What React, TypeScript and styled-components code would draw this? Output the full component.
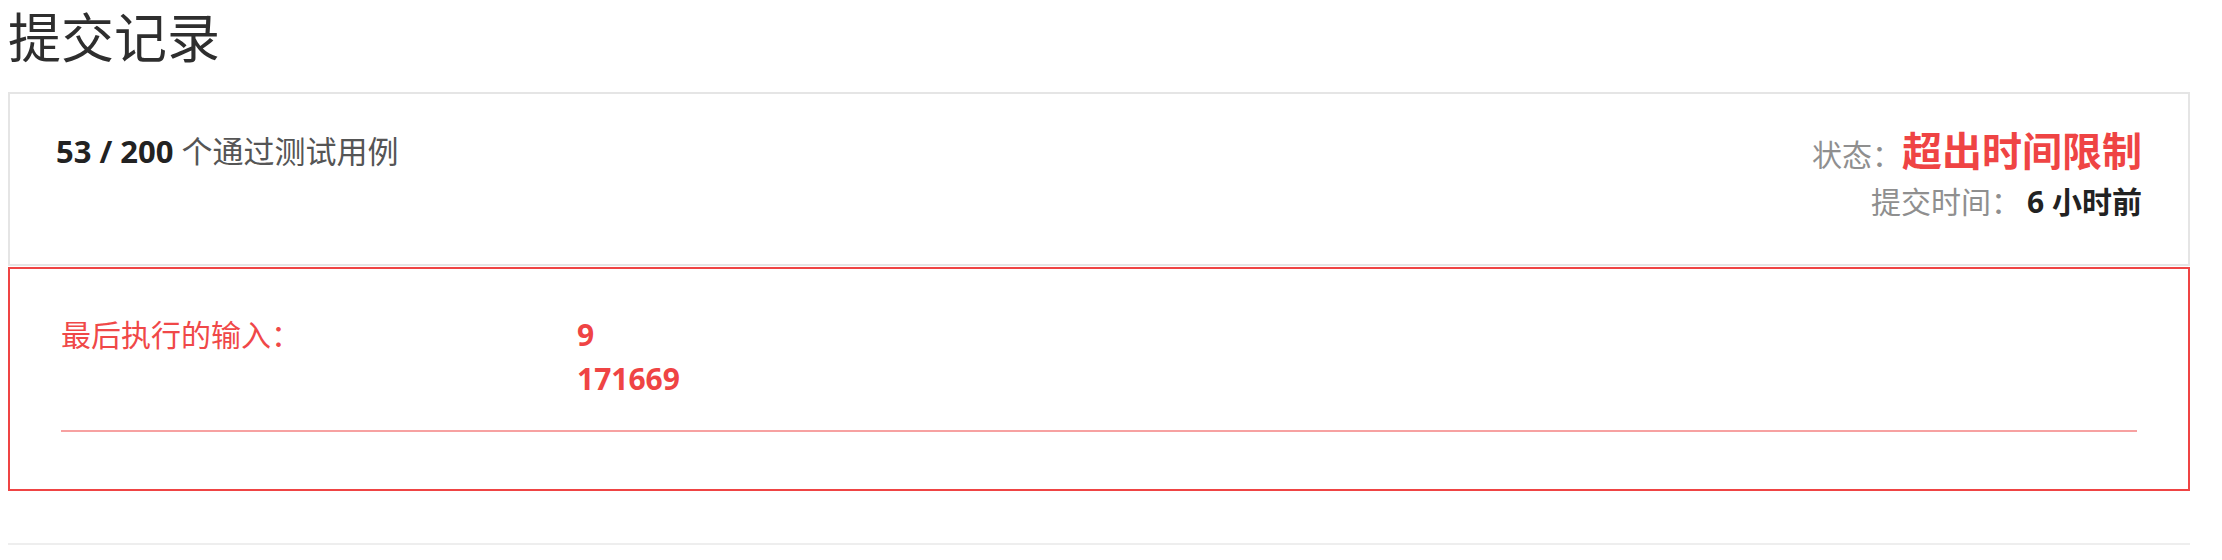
import React from "react";
import styled, { createGlobalStyle } from "styled-components";

const GlobalStyle = createGlobalStyle`
  html, body {
    margin: 0;
    padding: 0;
    background: #fff;
  }
  body {
    font-family: "Open Sans", "Noto Sans CJK SC", sans-serif;
    color: #333;
  }
`;

const Page = styled.div`
  padding: 0 32px 0 8px;
`;

const Title = styled.h2`
  margin: 0 0 16px;
  font-size: 53px;
  line-height: 76px;
  font-weight: 400;
  color: #2e2e2e;
`;

const Header = styled.div`
  display: flex;
  justify-content: space-between;
  align-items: flex-start;
  padding: 30px 46px 42px 46px;
  border: 2px solid #e5e5e5;
`;

const PassCount = styled.div`
  font-size: 31px;
  line-height: 54px;
  color: #555;

  strong {
    color: #222;
    font-weight: 700;
  }
`;

const Meta = styled.div`
  display: flex;
  flex-direction: column;
  align-items: flex-end;
`;

const MetaLine = styled.div<{ $big?: boolean }>`
  font-size: 30px;
  line-height: ${({ $big }) => ($big ? "54px" : "40px")};
  color: #8f8f8f;
`;

const Status = styled.span`
  font-size: 40px;
  font-weight: 700;
  color: #ef4444;
`;

const TimeAgo = styled.span`
  font-weight: 700;
  color: #222;
  margin-left: 6px;
`;

const ErrorBox = styled.div`
  border: 2px solid #ef4444;
  margin-top: 1px;
  padding: 44px 51px 57px 51px;
`;

const InputGrid = styled.div`
  display: grid;
  grid-template-columns: calc(25% - 3px) 1fr;
  padding-bottom: 29px;
  border-bottom: 2px solid rgba(239, 68, 68, 0.5);
`;

const Label = styled.div`
  font-size: 30px;
  line-height: 44px;
  color: #f04848;
`;

const Values = styled.div`
  font-size: 30px;
  line-height: 44px;
  font-weight: 700;
  color: #ef4444;
`;

const Divider = styled.div`
  margin-top: 52px;
  border-top: 2px solid #eeeeee;
`;

const lastInput = ["9", "171669"];

export default function App() {
  return (
    <Page>
      <GlobalStyle />
      <Title>提交记录</Title>
      <Header>
        <PassCount>
          <strong>53 / 200</strong> 个通过测试用例
        </PassCount>
        <Meta>
          <MetaLine $big>
            状态：<Status>超出时间限制</Status>
          </MetaLine>
          <MetaLine>
            提交时间：<TimeAgo>6 小时前</TimeAgo>
          </MetaLine>
        </Meta>
      </Header>
      <ErrorBox>
        <InputGrid>
          <Label>最后执行的输入：</Label>
          <Values>
            {lastInput.map((v, i) => (
              <div key={i}>{v}</div>
            ))}
          </Values>
        </InputGrid>
      </ErrorBox>
      <Divider />
    </Page>
  );
}
